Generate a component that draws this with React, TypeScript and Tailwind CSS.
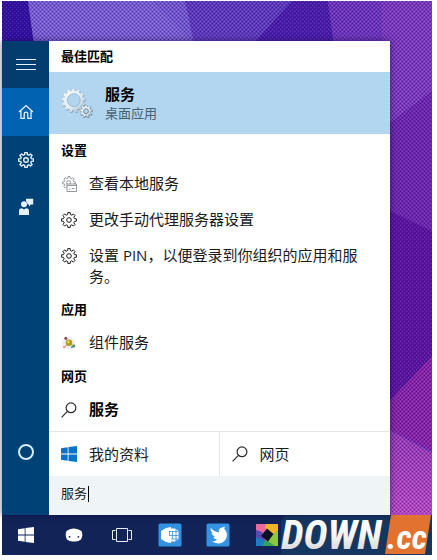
import React from 'react';
import clsx from 'clsx';

// Outline of a cog wheel as a closed path
function cogPath(cx: number, cy: number, teeth: number, outer: number, inner: number) {
  const step = (Math.PI * 2) / teeth;
  const points: string[] = [];
  for (let i = 0; i < teeth; i++) {
    const a = i * step - Math.PI / 2;
    [
      [-0.32, inner],
      [-0.2, outer],
      [0.2, outer],
      [0.32, inner],
    ].forEach(([offset, r]) => {
      const t = a + offset * step;
      points.push(`${(cx + r * Math.cos(t)).toFixed(2)} ${(cy + r * Math.sin(t)).toFixed(2)}`);
    });
  }
  return `M${points.join('L')}Z`;
}

function CogIcon({ className }: { className?: string }) {
  return (
    <svg viewBox="0 0 16 16" className={clsx('h-4 w-4', className)} fill="none" stroke="currentColor" strokeLinejoin="round">
      <path d={cogPath(8, 8, 8, 7.5, 5.6)} />
      <circle cx="8" cy="8" r="2.3" />
    </svg>
  );
}

function ServicesIcon() {
  return (
    <svg viewBox="0 0 32 32" className="h-8 w-8" strokeLinejoin="round">
      <defs>
        <linearGradient id="steel" x1="0" y1="0" x2="1" y2="1">
          <stop offset="0" stopColor="#f8fcfe" />
          <stop offset="0.6" stopColor="#dcebf4" />
          <stop offset="1" stopColor="#9db5c6" />
        </linearGradient>
      </defs>
      <path d={cogPath(13, 14.4, 13, 12, 9.8)} fill="#8aa5b9" />
      <path d={cogPath(12.4, 13.4, 13, 12, 9.8)} fill="url(#steel)" stroke="#a3bccd" strokeWidth="0.4" />
      <circle cx="12.8" cy="13.2" r="6.4" fill="#b2d5f0" stroke="#9ab4c7" strokeWidth="0.9" />
      <path d={cogPath(25.4, 24.8, 9, 6.6, 4.9)} fill="#71889b" />
      <path d={cogPath(25, 24.2, 9, 6.3, 4.7)} fill="url(#steel)" stroke="#7f97a8" strokeWidth="0.5" />
      <circle cx="25" cy="24.2" r="2.4" fill="#b2d5f0" stroke="#71889b" />
    </svg>
  );
}

function LocalServicesIcon() {
  return (
    <svg viewBox="0 0 16 16" className="h-4 w-4" fill="none" stroke="#96999c" strokeLinejoin="round">
      <path d={cogPath(8, 6.8, 8, 6.4, 4.7)} />
      <circle cx="7.6" cy="6.6" r="2" />
      <rect x="6" y="8" width="9.5" height="7.5" fill="#fff" />
      <path d="M6 9.5h9.5M8 13.8l1.2-1.6M11 12.5h2.5" />
    </svg>
  );
}

function ComponentIcon() {
  return (
    <svg viewBox="0 0 16 16" className="h-4 w-4">
      <circle cx="7.5" cy="8" r="6.6" fill="#f3efef" />
      <path d="M4.6 3.4l3 4.5M3.6 11.6l4-3.6 5 2.6" stroke="#a5a08f" fill="none" />
      <circle cx="8" cy="7.8" r="3.3" fill="#b59a1d" />
      <circle cx="7.2" cy="6.9" r="1.4" fill="#e6d44c" />
      <circle cx="4.8" cy="3.2" r="1.5" fill="#7d5260" />
      <circle cx="3.2" cy="12" r="1.3" fill="#dfa396" />
      <circle cx="12.8" cy="11" r="1.5" fill="#3f9a4d" />
      <circle cx="11" cy="12.2" r="0.9" fill="#3e6fb0" />
    </svg>
  );
}

function SearchIcon() {
  return (
    <svg viewBox="0 0 16 16" className="h-4 w-4" fill="none" stroke="#2b2b2b" strokeWidth="1.2">
      <circle cx="10" cy="5.8" r="4.9" />
      <path d="M6.4 9.4L.6 15.4" />
    </svg>
  );
}

function WindowsIcon({ className }: { className?: string }) {
  return (
    <svg viewBox="0 0 16 16" className={clsx('h-4 w-4', className)} fill="currentColor">
      <path d="M0 2.2L6.7 1.2V7.6H0zM7.5 1.1L16 0V7.6H7.5zM0 8.4H6.7V14.8L0 13.8zM7.5 8.4H16V16L7.5 14.9z" />
    </svg>
  );
}

function HomeIcon() {
  return (
    <svg viewBox="0 0 16 16" className="h-4 w-4" fill="none" stroke="currentColor" strokeWidth="1.3">
      <path d="M1 8L8 1.6 15 8M2.9 6.6V14.4H6.2V9.8Q6.2 8.2 8 8.2T9.8 9.8V14.4H13.1V6.6" />
    </svg>
  );
}

function FeedbackIcon() {
  return (
    <svg viewBox="0 0 16 18" className="h-[18px] w-4" fill="currentColor">
      <path d="M8 .8h7.2V6.6h-2.4L11 8.4V6.6H9.6Q9.6 4.4 8 3.2z" />
      <circle cx="6" cy="6.2" r="3" />
      <path d="M1 17V13Q1 10.2 3.8 10.2L6 11.6 8.2 10.2Q11 10.2 11 13V17z" />
    </svg>
  );
}

function MenuIcon() {
  return (
    <svg viewBox="0 0 20 14" className="h-[14px] w-5" stroke="currentColor">
      <path d="M0 1.5H20M0 6.5H20M0 11.5H20" />
    </svg>
  );
}

function Wallpaper() {
  return (
    <svg
      viewBox="0 0 430 514"
      preserveAspectRatio="none"
      className="absolute inset-0 h-full w-full"
      aria-hidden="true"
    >
      <defs>
        <pattern id="weave" width="4" height="4" patternUnits="userSpaceOnUse">
          <path d="M0 0h1v1H0zM2 2h1v1H2z" fill="#1c0058" fillOpacity="0.36" />
          <path d="M2 0h1v1H2zM0 2h1v1H0z" fill="#fff" fillOpacity="0.16" />
        </pattern>
        <linearGradient id="glow" x1="0" y1="0" x2="0" y2="1">
          <stop offset="0" stopColor="#9238b4" />
          <stop offset="1" stopColor="#b248c2" />
        </linearGradient>
      </defs>
      <rect width="430" height="514" fill="#7055cc" />
      <path d="M0 0H26L32 42H0z" fill="#3110a0" />
      <path d="M26 0H150L192 42H32z" fill="#765cd0" />
      <path d="M183 0H290L256 42H192z" fill="#5c38bb" />
      <path d="M290 0H326L332 42H252z" fill="#481ba9" />
      <path d="M326 0H430V514H380V42H332z" fill="#6a33ba" />
      <path d="M380 0H430V90L380 128z" fill="#7a38bc" />
      <path d="M430 90V230L380 206V128z" fill="#6c25ad" />
      <path d="M380 206L430 230V365L380 410z" fill="#5a139e" />
      <path d="M430 355V450L380 425V408z" fill="#8423a6" />
      <path d="M380 425L430 452V514H380z" fill="url(#glow)" />
      <rect width="430" height="514" fill="url(#weave)" />
    </svg>
  );
}

const navItems = [
  { label: '菜单', icon: <MenuIcon />, className: 'h-[47px] bg-[#033c6e]' },
  { label: '主页', icon: <HomeIcon />, className: 'h-12 bg-[#0062b1]' },
  { label: '设置', icon: <CogIcon className="stroke-[1.4]" />, className: 'h-[47px]' },
  { label: '反馈', icon: <FeedbackIcon />, className: 'h-[47px]' },
];

const groups = [
  {
    title: '设置',
    items: [
      { label: '查看本地服务', icon: <LocalServicesIcon /> },
      { label: '更改手动代理服务器设置', icon: <CogIcon /> },
      { label: '设置 PIN，以便登录到你组织的应用和服务。', icon: <CogIcon /> },
    ],
  },
  { title: '应用', items: [{ label: '组件服务', icon: <ComponentIcon /> }] },
  { title: '网页', items: [{ label: '服务', icon: <SearchIcon />, bold: true }] },
];

function NavRail() {
  return (
    <nav className="flex w-[47px] shrink-0 flex-col bg-[#004276] pb-[39px] text-[#e4f1fb]">
      {navItems.map((item) => (
        <button
          key={item.label}
          aria-label={item.label}
          className={clsx('flex items-center justify-center', item.className)}
        >
          {item.icon}
        </button>
      ))}
      <button aria-label="Cortana" className="mt-auto flex h-12 items-center justify-center">
        <span className="h-4 w-4 rounded-full border-2 border-[#d3ecfa]" />
      </button>
    </nav>
  );
}

function Results() {
  return (
    <main className="flex min-w-0 flex-1 flex-col bg-white text-black">
      <h2 className="flex h-[31px] items-center px-3 text-[13px] font-bold">最佳匹配</h2>
      <button className="flex h-[62px] items-center gap-3 bg-[#b2d5f0] px-3 text-left">
        <ServicesIcon />
        <span className="flex flex-col">
          <span className="text-[15px] leading-5 font-bold">服务</span>
          <span className="text-[13px] leading-[18px] text-[#47616f]">桌面应用</span>
        </span>
      </button>

      <div className="pt-px">
        {groups.map((group) => (
          <section key={group.title}>
            <h2 className="flex h-[31px] items-center px-3 text-[13px] font-bold">{group.title}</h2>
            {group.items.map((item) => (
              <button
                key={item.label}
                className={clsx(
                  'flex min-h-9 w-full items-start gap-3 py-[7px] pr-6 pl-3 text-left text-[15px] leading-[21px]',
                  'bold' in item ? 'font-bold' : 'text-[#1a1a1a]'
                )}
              >
                <span className="flex h-[21px] shrink-0 items-center">{item.icon}</span>
                <span>{item.label}</span>
              </button>
            ))}
          </section>
        ))}
      </div>

      <div className="mt-auto grid grid-cols-2 border-t border-[#e3e5e6] text-[15px] text-[#1a1a1a]">
        <button className="flex h-11 items-center gap-3 border-r border-[#e3e5e6] px-3">
          <WindowsIcon className="text-[#0d72c7]" />
          我的资料
        </button>
        <button className="flex h-11 items-center gap-3 px-3">
          <SearchIcon />
          网页
        </button>
      </div>
      <label className="flex h-[39px] items-center bg-[#eff4f7] px-3 pb-1">
        <input
          aria-label="搜索"
          defaultValue="服务"
          className="w-[27px] bg-transparent text-[13px] text-[#1a1a1a] caret-transparent outline-none"
        />
        <span className="h-4 w-px bg-black" />
      </label>
    </main>
  );
}

function Watermark() {
  return (
    <svg viewBox="0 0 151 40" className="ml-auto h-10 w-[151px] shrink-0 overflow-visible" role="img" aria-label="DOWN.cc">
      <defs>
        <linearGradient id="silver" x1="0" y1="0" x2="0" y2="1">
          <stop offset="0.2" stopColor="#ffffff" />
          <stop offset="0.55" stopColor="#f2f2f2" />
          <stop offset="1" stopColor="#c4c9cf" />
        </linearGradient>
      </defs>
      <path d="M4 0H151V40H0V6z" fill="#15365e" />
      <path d="M110 0H150L144 39H104z" fill="#e2722f" />
      <g className="font-['Roboto_Condensed','Open_Sans_Condensed','Noto_Sans_Condensed',Roboto,sans-serif] font-bold italic">
        <text x="0" y="34" className="text-[41px]" fill="url(#silver)">
          DOWN
        </text>
        <text x="106" y="34" className="text-[34px]" fill="#fff">
          .cc
        </text>
      </g>
    </svg>
  );
}

function Taskbar() {
  return (
    <footer className="flex h-10 items-center overflow-hidden bg-[#112357] text-white">
      <button aria-label="开始" className="flex h-10 w-12 shrink-0 items-center justify-center">
        <WindowsIcon />
      </button>
      <button aria-label="小娜" className="flex h-10 w-12 shrink-0 items-center justify-center">
        <svg viewBox="0 0 18 14" className="h-[14px] w-[18px]">
          <path d="M1.5 3Q5 .2 9 .5T16.5 3Q18.4 7.5 16 11.4 13 14 9 13.4 5 14 2 11.4-.4 7.5 1.5 3z" fill="#fff" />
          <circle cx="4.6" cy="8.8" r="0.9" fill="#112357" />
          <circle cx="13.4" cy="8.8" r="0.9" fill="#112357" />
        </svg>
      </button>
      <button aria-label="任务视图" className="flex h-10 w-12 shrink-0 items-center justify-center">
        <svg viewBox="0 0 20 16" className="h-4 w-5" fill="none" stroke="#e8edf8">
          <path d="M4.5 1.5H15.5V14.5H4.5zM3.5 3.5H.5V12.5H3.5M16.5 3.5H19.5V12.5H16.5" />
        </svg>
      </button>
      <button aria-label="应用中心" className="flex h-10 w-12 shrink-0 items-center justify-center">
        <svg viewBox="0 0 24 24" className="h-6 w-6">
          <rect x="0.5" y="0.5" width="23" height="23" rx="1.5" fill="#3291e0" />
          <path d="M3 8L8 5 13 4V20L8 19 3 16z" fill="#fff" />
          <path d="M12 5.5H17L20.5 8V16L17 18.5H12z" fill="#fff" />
          <path d="M11.5 8.5H20M11.5 12.5H20.5M13 16H20M14.5 8.5V16M18 6V18M11.5 8V13" stroke="#3291e0" strokeWidth="0.8" fill="none" />
        </svg>
      </button>
      <button aria-label="飞鸟" className="flex h-10 w-12 shrink-0 items-center justify-center">
        <svg viewBox="0 0 24 24" className="h-6 w-6">
          <rect x="0.5" y="0.5" width="23" height="23" rx="1.5" fill="#3493e2" />
          <path
            d="M4.5 4.5Q7 8.5 13 9.5 11.8 6 15.5 4.8L19 3.6 18.2 5.8Q21.6 9 20.8 13.4 19.5 19.6 13 20.4 9 20.6 6 18.6 9.6 18.4 11 16.6 8 16.2 7.4 14L9 13.8Q6 12.5 5.4 9.8L6.8 10Q4.2 8 4.5 4.5z"
            fill="#fff"
          />
        </svg>
      </button>
      <button aria-label="相册" className="flex h-10 w-[38px] shrink-0 items-center justify-end pr-0.5">
        <svg viewBox="0 0 22 22" className="h-[22px] w-[22px]">
          <rect width="22" height="22" fill="#ea6a9e" />
          <path d="M10 0H22V12L17 10 9 4z" fill="#f2b522" />
          <path d="M22 6V22H14L12 17 17 10z" fill="#8cc63a" />
          <path d="M0 22V9L5 12 14 22z" fill="#1c7ec4" />
          <path d="M0 6L6 8 9 17 0 13z" fill="#5b4ab4" />
          <path d="M7 22L9 16 12 17 19 22z" fill="#35a35b" />
          <path d="M11 4.5L17.5 10 12 17.5 5 12z" fill="#0c1026" />
        </svg>
      </button>
      <Watermark />
    </footer>
  );
}

export default function App() {
  return (
    <div className="flex min-h-screen flex-col bg-white pt-px pr-[5px] pb-[5px] pl-0.5 font-['Open_Sans','Noto_Sans_CJK_SC',sans-serif]">
      <div className="relative flex flex-1 flex-col">
        <Wallpaper />
        <div className="relative mt-10 mr-[42px] flex flex-1 shadow-[0_0_6px_rgba(20,0,60,0.6)]">
          <NavRail />
          <Results />
        </div>
      </div>
      <Taskbar />
    </div>
  );
}
